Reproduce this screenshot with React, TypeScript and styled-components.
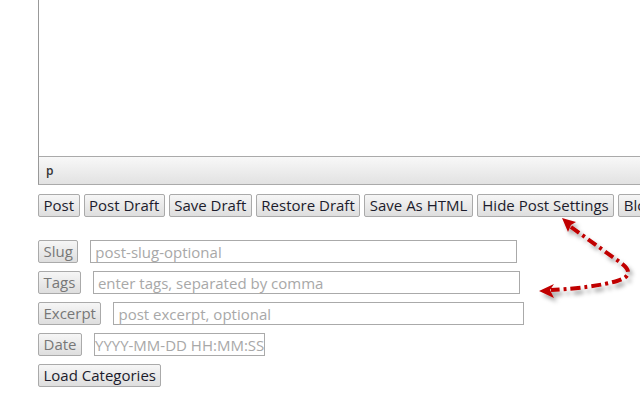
import React from "react";
import styled, { createGlobalStyle } from "styled-components";

const GlobalStyle = createGlobalStyle`
  html, body {
    margin: 0;
    padding: 0;
    background: #fff;
    overflow: hidden;
  }
  body {
    font-family: "Open Sans", "DejaVu Sans", sans-serif;
  }
`;

const Page = styled.div`
  position: relative;
  width: 640px;
  height: 400px;
  overflow: hidden;
  padding-left: 38px;
  box-sizing: border-box;
`;

const Editor = styled.div`
  width: 700px;
  border-left: 1px solid #999;
  border-bottom: 1px solid #aaa;
  display: flex;
  flex-direction: column;
`;

const EditArea = styled.div`
  height: 156px;
  background: #fff;
`;

const StatusBar = styled.div`
  height: 27px;
  border-top: 1px solid #aaa;
  background: linear-gradient(#f8f8f8, #e2e2e2);
  display: flex;
  align-items: center;
  padding-left: 7px;
  font-size: 12px;
  font-weight: 600;
  color: #333;
`;

const Toolbar = styled.div`
  display: flex;
  gap: 4px;
  margin-top: 9px;
  white-space: nowrap;
`;

const Button = styled.button<{ $muted?: boolean }>`
  height: 23px;
  padding: 0 4.5px;
  margin: 0;
  border: 1px solid #aaa;
  border-radius: 2px;
  background: linear-gradient(#f6f6f6, #dedede);
  font-family: "Open Sans", "DejaVu Sans", sans-serif;
  font-size: 15px;
  line-height: 21px;
  color: ${(p) => (p.$muted ? "#777" : "#1c1c2c")};
  flex-shrink: 0;
`;

const Settings = styled.div`
  margin-top: 23px;
  display: flex;
  flex-direction: column;
  gap: 8px;
  align-items: flex-start;
`;

const Row = styled.div`
  display: flex;
  align-items: center;
  gap: 12px;
`;

const Field = styled.input<{ $w: number; $pad: number }>`
  width: ${(p) => p.$w}px;
  height: 23px;
  box-sizing: border-box;
  border: 1px solid #aaa;
  padding: 0 ${(p) => p.$pad}px;
  margin: 0;
  font-family: "Open Sans", "DejaVu Sans", sans-serif;
  font-size: 15px;
  color: #333;
  outline: none;
  &::placeholder {
    color: #a8a8a8;
  }
`;

const Overlay = styled.svg`
  position: absolute;
  left: 0;
  top: 0;
  pointer-events: none;
`;

function PointerArrow() {
  return (
    <Overlay width="640" height="400" viewBox="0 0 640 400">
      <defs>
        <filter id="sh" x="-20%" y="-20%" width="140%" height="140%">
          <feDropShadow dx="3" dy="4" stdDeviation="2" floodColor="#000" floodOpacity="0.35" />
        </filter>
      </defs>
      <g filter="url(#sh)">
        <path
          d="M571 227 L621 263 Q637 275 617 281 Q592 288 551 290"
          fill="none"
          stroke="#c00000"
          strokeWidth="4"
          strokeDasharray="10 4 3 4"
        />
        <polygon points="562,218 576,222 571,225 568,232" fill="#c00000" />
        <polygon points="539,291 554,284 550,290 554,298" fill="#c00000" />
      </g>
    </Overlay>
  );
}

const fields = [
  { label: "Slug", placeholder: "post-slug-optional", w: 427, pad: 4 },
  { label: "Tags", placeholder: "enter tags, separated by comma", w: 427, pad: 4 },
  { label: "Excerpt", placeholder: "post excerpt, optional", w: 411, pad: 4 },
  { label: "Date", placeholder: "YYYY-MM-DD HH:MM:SS", w: 171, pad: 0 },
];

export default function App() {
  return (
    <>
      <GlobalStyle />
      <Page>
        <Editor>
          <EditArea />
          <StatusBar>p</StatusBar>
        </Editor>
        <Toolbar>
          <Button>Post</Button>
          <Button>Post Draft</Button>
          <Button>Save Draft</Button>
          <Button>Restore Draft</Button>
          <Button>Save As HTML</Button>
          <Button>Hide Post Settings</Button>
          <Button>Blog</Button>
        </Toolbar>
        <Settings>
          {fields.map((f) => (
            <Row key={f.label}>
              <Button $muted>{f.label}</Button>
              <Field $w={f.w} $pad={f.pad} placeholder={f.placeholder} />
            </Row>
          ))}
          <Button>Load Categories</Button>
        </Settings>
        <PointerArrow />
      </Page>
    </>
  );
}
